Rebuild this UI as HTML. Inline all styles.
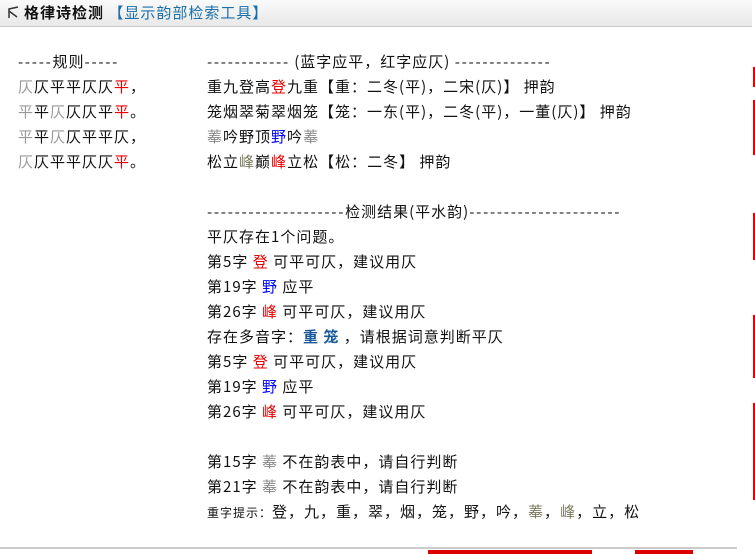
<!DOCTYPE html>
<html><head><meta charset="utf-8"><style>
body{margin:0;width:755px;height:554px;background:#fff;position:relative;overflow:hidden;font-family:"Noto Sans CJK SC",sans-serif;font-size:15px;color:#111}
.hdr{position:absolute;left:0;top:0;width:752px;height:26px;background:linear-gradient(#fafafa,#e8e8e8);border-bottom:1px solid #c8c8c8}
.hdr .t{position:absolute;left:24px;top:0px;line-height:26px;font-weight:bold;font-size:15px;letter-spacing:1px}
.hdr .l{color:#1a6fa8;font-weight:normal}
.col{position:absolute;line-height:25px;white-space:pre;letter-spacing:1px}
.d{letter-spacing:1.7px}
.g{color:#999}.r{color:#e00}.b{color:#00f}.gr{color:#888}.o{color:#7a7a60}
.rb{position:absolute;left:753px;width:2px;background:#e00}
.bb{position:absolute;top:550px;height:4px;background:#d00}
</style></head><body>
<div class="hdr"><svg style="position:absolute;left:6px;top:6px" width="14" height="14"><path d="M3 12 L3 3 L12 1 M3 5 L11 11" stroke="#333" stroke-width="1.5" fill="none"/></svg><div class="t">格律诗检测 <span class="l">【显示韵部检索工具】</span></div></div>
<div class="col" style="left:18px;top:49px"><span class="d">-----</span>规则<span class="d">-----</span>
<span class="g">仄</span>仄平平仄仄<span class="r">平</span>，
<span class="g">平</span>平<span class="g">仄</span>仄仄平<span class="r">平</span>。
<span class="g">平</span>平<span class="g">仄</span>仄平平仄，
<span class="g">仄</span>仄平平仄仄<span class="r">平</span>。</div>
<div class="col" style="left:207px;top:49px"><span class="d">------------</span> (蓝字应平，红字应仄) <span class="d">--------------</span>
重九登高<span class="r">登</span>九重【重：二冬(平)，二宋(仄)】 押韵
笼烟翠菊翠烟笼【笼：一东(平)，二冬(平)，一董(仄)】 押韵
<span class="gr">菶</span>吟野顶<span class="b">野</span>吟<span class="gr">菶</span>
松立<span class="o">峰</span>巅<span class="r">峰</span>立松【松：二冬】 押韵

<span class="d">--------------------</span>检测结果(平水韵)<span class="d">----------------------</span>
平仄存在1个问题。
第5字 <span class="r">登</span> 可平可仄，建议用仄
第19字 <span class="b">野</span> 应平
第26字 <span class="r">峰</span> 可平可仄，建议用仄
存在多音字：<b style="color:#1a5a9a">重 笼</b> ，请根据词意判断平仄
第5字 <span class="r">登</span> 可平可仄，建议用仄
第19字 <span class="b">野</span> 应平
第26字 <span class="r">峰</span> 可平可仄，建议用仄

第15字 <span class="gr">菶</span> 不在韵表中，请自行判断
第21字 <span class="gr">菶</span> 不在韵表中，请自行判断
<span style="font-size:12px">重字提示：</span>登，九，重，翠，烟，笼，野，吟，<span class="o">菶</span>，<span class="o">峰</span>，立，松</div>
<div class="rb" style="top:67px;height:20px"></div>
<div class="rb" style="top:100px;height:55px"></div>
<div class="rb" style="top:213px;height:47px"></div>
<div class="rb" style="top:315px;height:63px"></div>
<div class="rb" style="top:403px;height:97px"></div>
<div style="position:absolute;left:0;top:547px;width:737px;height:2px;background:#ccc"></div>
<div class="bb" style="left:428px;width:164px"></div>
<div class="bb" style="left:635px;width:58px"></div>
</body></html>
